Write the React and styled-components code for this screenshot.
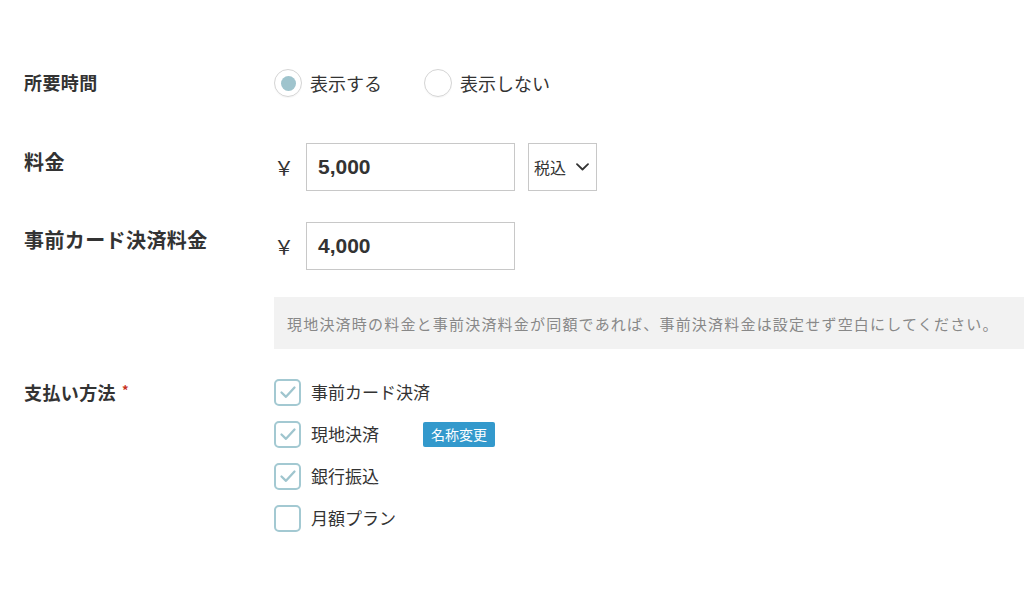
import React from "react";
import styled, { createGlobalStyle } from "styled-components";

const GlobalStyle = createGlobalStyle`
    body {
        margin: 0;
        background: #fff;
        font-family: "Noto Sans CJK JP", "Noto Sans", sans-serif;
        color: #333;
    }
`

const payments = [
    { name: "事前カード決済", checked: true },
    { name: "現地決済", checked: true, badge: "名称変更" },
    { name: "銀行振込", checked: true },
    { name: "月額プラン", checked: false },
];

const CheckIcon = () => (
    <svg width="18" height="18" viewBox="0 0 18 18" fill="none">
        <path d="M2.5 9.5 L7 13.8 L15.5 4.5" stroke="#9fc5ce" strokeWidth="2.3" strokeLinecap="round" strokeLinejoin="round" />
    </svg>
);

const Chevron = () => (
    <svg width="13" height="8" viewBox="0 0 13 8" fill="none">
        <path d="M1 1.2 L6.5 6.5 L12 1.2" stroke="#333" strokeWidth="1.8" strokeLinecap="round" strokeLinejoin="round" />
    </svg>
);

const App = () => {
    return (
        <>
            <GlobalStyle />
            <Form>
                <Row $gap={46}>
                    <Label $pt={0} $size={18}>所要時間</Label>
                    <Field>
                        <RadioGroup>
                            <RadioOption>
                                <Radio $on />
                                <RadioText>表示する</RadioText>
                            </RadioOption>
                            <RadioOption>
                                <Radio />
                                <RadioText>表示しない</RadioText>
                            </RadioOption>
                        </RadioGroup>
                    </Field>
                </Row>

                <Row $gap={31}>
                    <Label $pt={6} $size={20}>料金</Label>
                    <Field>
                        <Yen>￥</Yen>
                        <PriceInput>5,000</PriceInput>
                        <TaxSelect>
                            <span>税込</span>
                            <Chevron />
                        </TaxSelect>
                    </Field>
                </Row>

                <Row $gap={27}>
                    <Label $pt={5} $size={20}>事前カード決済料金</Label>
                    <Field>
                        <Yen>￥</Yen>
                        <PriceInput>4,000</PriceInput>
                    </Field>
                </Row>

                <Row $gap={30}>
                    <Label />
                    <Notice>
                        現地決済時の料金と事前決済料金が同額であれば、事前決済料金は設定せず空白にしてください。
                    </Notice>
                </Row>

                <Row $gap={0}>
                    <Label $pt={0} $size={18}>
                        支払い方法<Required>*</Required>
                    </Label>
                    <CheckList>
                        {payments.map((p) => (
                            <CheckRow key={p.name}>
                                <CheckBox>{p.checked && <CheckIcon />}</CheckBox>
                                <OptionText>{p.name}</OptionText>
                                {p.badge && <Badge>{p.badge}</Badge>}
                            </CheckRow>
                        ))}
                    </CheckList>
                </Row>
            </Form>
        </>
    );
}
export default App;


const Form = styled.div`
    padding: 69px 0 60px 24px;
    overflow: hidden;
`

const Row = styled.div`
    display: flex;
    align-items: flex-start;
    margin-bottom: ${(p) => p.$gap}px;
`

const Label = styled.div`
    width: 250px;
    flex-shrink: 0;
    padding-top: ${(p) => p.$pt || 0}px;
    font-size: ${(p) => p.$size || 18}px;
    line-height: 26px;
    font-weight: bold;
    letter-spacing: 0.4px;
    color: #333;
`

const Required = styled.span`
    color: #c8321c;
    font-size: 13px;
    vertical-align: top;
    margin-left: 6px;
    position: relative;
    top: -2px;
`

const Field = styled.div`
    display: flex;
    align-items: center;
`

const RadioGroup = styled.div`
    display: flex;
    align-items: center;
    gap: 42px;
`

const RadioOption = styled.label`
    display: flex;
    align-items: center;
    gap: 8px;
    cursor: pointer;
`

const Radio = styled.span`
    width: 28px;
    height: 28px;
    box-sizing: border-box;
    border-radius: 50%;
    border: 1px solid #d4d4d4;
    box-shadow: 0 1px 1px rgba(0, 0, 0, 0.04);
    display: flex;
    align-items: center;
    justify-content: center;
    &::after {
        content: "";
        width: 15px;
        height: 15px;
        border-radius: 50%;
        background: ${(p) => (p.$on ? "#9fc4cd" : "transparent")};
    }
`

const RadioText = styled.span`
    font-size: 18px;
    line-height: 26px;
    color: #333;
`

const OptionText = styled.span`
    font-size: 17px;
    line-height: 26px;
    color: #333;
`

const Yen = styled.span`
    font-size: 20px;
    width: 20px;
    margin-right: 12px;
    color: #333;
`

const PriceInput = styled.div`
    width: 209px;
    height: 48px;
    box-sizing: border-box;
    border: 1px solid #c8c8c8;
    padding-left: 11px;
    display: flex;
    align-items: center;
    font-family: "Liberation Sans", Arial, sans-serif;
    font-size: 21px;
    font-weight: bold;
    color: #333;
`

const TaxSelect = styled.div`
    margin-left: 13px;
    width: 69px;
    height: 48px;
    box-sizing: border-box;
    border: 1px solid #c8c8c8;
    padding: 0 7px 0 5px;
    display: flex;
    align-items: center;
    justify-content: space-between;
    font-size: 16px;
    color: #333;
`

const Notice = styled.div`
    flex: 1;
    height: 52px;
    background: #f2f2f2;
    padding-left: 13px;
    display: flex;
    align-items: center;
    font-size: 15px;
    letter-spacing: 1.2px;
    color: #888;
    white-space: nowrap;
`

const CheckList = styled.div`
    display: flex;
    flex-direction: column;
    gap: 16px;
`

const CheckRow = styled.label`
    display: flex;
    align-items: center;
    height: 26px;
    gap: 10px;
    cursor: pointer;
`

const CheckBox = styled.span`
    width: 27px;
    height: 27px;
    box-sizing: border-box;
    border: 2px solid #a3c9d2;
    border-radius: 5px;
    display: flex;
    align-items: center;
    justify-content: center;
`

const Badge = styled.span`
    margin-left: 34px;
    background: #3399cc;
    color: #fff;
    font-size: 14px;
    line-height: 25px;
    padding: 0 8px;
    border-radius: 2px;
`
